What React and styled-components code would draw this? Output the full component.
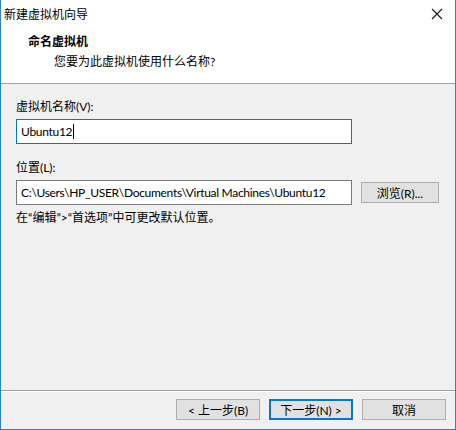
import React from 'react';
import styled, { createGlobalStyle } from 'styled-components';

const GlobalStyle = createGlobalStyle`
  html, body {
    margin: 0;
    padding: 0;
    background: #ffffff;
  }
  * {
    box-sizing: border-box;
  }
`;

const FONT = `Lato, "Noto Sans CJK SC", sans-serif`;

const App = () => {
  return (
    <>
      <GlobalStyle />
      <Window>
        <TitleBar>
          <TitleText>新建虚拟机向导</TitleText>
          <CloseButton>
            <svg width="12" height="12" viewBox="0 0 12 12">
              <path d="M1 1 L11 11 M11 1 L1 11" stroke="#1a1a1a" strokeWidth="1.1" fill="none" />
            </svg>
          </CloseButton>
        </TitleBar>
        <Header>
          <HeaderTitle>命名虚拟机</HeaderTitle>
          <HeaderSub>您要为此虚拟机使用什么名称?</HeaderSub>
        </Header>
        <Body>
          <Field>
            <Label>虚拟机名称(V):</Label>
            <TextInput focused>
              Ubuntu12<Caret />
            </TextInput>
          </Field>
          <Field>
            <Label>位置(L):</Label>
            <Row>
              <TextInput>C:\Users\HP_USER\Documents\Virtual Machines\Ubuntu12</TextInput>
              <Button width="78px">浏览(R)...</Button>
            </Row>
            <Hint>在“编辑”&gt;“首选项”中可更改默认位置。</Hint>
          </Field>
        </Body>
        <Footer>
          <Button width="84px">&lt; 上一步(B)</Button>
          <Button width="84px" primary>下一步(N) &gt;</Button>
          <Button width="84px">取消</Button>
        </Footer>
      </Window>
    </>
  );
};

const Window = styled.div`
  width: 456px;
  height: 430px;
  display: flex;
  flex-direction: column;
  border-left: 1px solid #2a83d6;
  border-right: 1px solid #2a83d6;
  border-bottom: 1px solid #2a83d6;
  background: #f0f0f0;
  font-family: ${FONT};
  font-size: 12px;
  color: #000;
`;

const TitleBar = styled.div`
  height: 27px;
  display: flex;
  align-items: center;
  justify-content: space-between;
  background: #ffffff;
  padding: 0 12px 0 3px;
`;

const TitleText = styled.span`
  font-size: 12px;
  color: #000;
`;

const CloseButton = styled.div`
  width: 12px;
  height: 12px;
  display: flex;
`;

const Header = styled.div`
  height: 57px;
  background: #ffffff;
  border-bottom: 1px solid #a0a0a0;
  padding: 6px 0 0 27px;
  display: flex;
  flex-direction: column;
`;

const HeaderTitle = styled.div`
  font-weight: 700;
  font-size: 12px;
  line-height: 18px;
`;

const HeaderSub = styled.div`
  padding-left: 26px;
  line-height: 18px;
  margin-top: 2px;
`;

const Body = styled.div`
  flex: 1;
  padding: 14px 0 0 15px;
  display: flex;
  flex-direction: column;
  gap: 15px;
  border-bottom: 1px solid #a0a0a0;
  box-shadow: 0 1px 0 #ffffff;
`;

const Field = styled.div`
  display: flex;
  flex-direction: column;
`;

const Label = styled.div`
  line-height: 17px;
  margin-bottom: 4px;
`;

const Row = styled.div`
  display: flex;
  align-items: center;
  gap: 9px;
`;

const TextInput = styled.div`
  width: 336px;
  height: 25px;
  background: #ffffff;
  border: 1px solid ${(p) => (p.focused ? '#0078d7' : '#7a7a7a')};
  display: flex;
  align-items: center;
  padding-left: 4px;
  white-space: nowrap;
  overflow: hidden;
  font-size: 12px;
  letter-spacing: -0.3px;
`;

const Caret = styled.span`
  display: inline-block;
  width: 1px;
  height: 15px;
  background: #000;
  margin-left: 1px;
`;

const Hint = styled.div`
  margin-top: 4px;
  line-height: 17px;
`;

const Button = styled.div`
  width: ${(p) => p.width};
  height: 21px;
  background: #e1e1e1;
  border: 1px solid ${(p) => (p.primary ? '#0078d7' : '#adadad')};
  box-shadow: ${(p) => (p.primary ? 'inset 0 0 0 1px #0078d7' : 'none')};
  display: flex;
  align-items: center;
  justify-content: center;
  font-size: 12px;
  white-space: nowrap;
`;

const Footer = styled.div`
  height: 38px;
  display: flex;
  justify-content: flex-end;
  align-items: flex-start;
  gap: 9px;
  padding: 8px 9px 0 0;
`;

export default App;
